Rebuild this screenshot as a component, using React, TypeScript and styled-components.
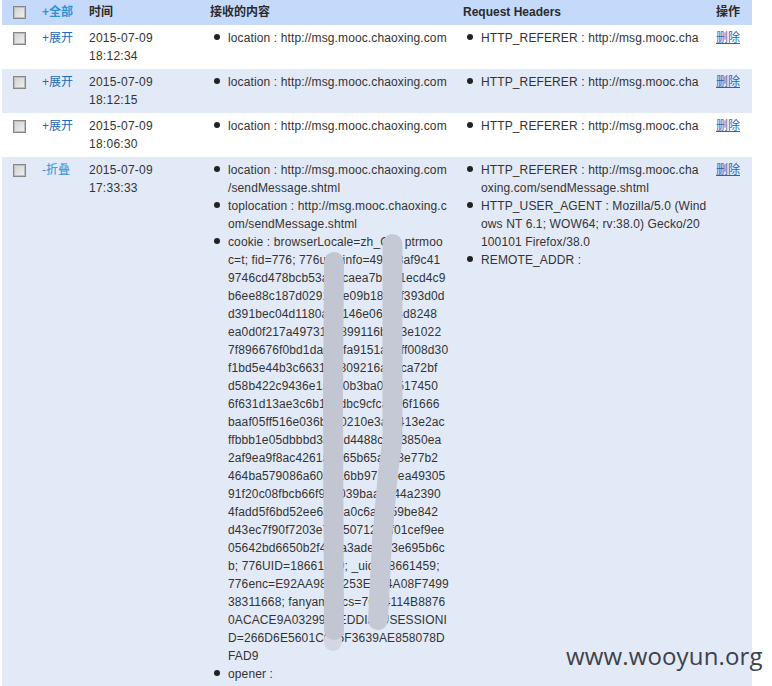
import {createGlobalStyle} from "styled-components";
import styled from "styled-components";

const GlobalStyle = createGlobalStyle`
  html, body {
    margin: 0;
    height: 686px;
    overflow: hidden;
    background: #fff;
  }
  body {
    font-family: "Liberation Sans", Arial, "Noto Sans CJK SC", sans-serif;
    font-size: 12px;
    line-height: 18px;
    color: #333;
  }
`;

const Page = styled.div`
  position: relative;
  width: 772px;
  height: 686px;
  overflow: hidden;
  padding-left: 2px;
  box-sizing: border-box;
`;

const Table = styled.table`
  width: 750px;
  table-layout: fixed;
  border-collapse: collapse;
`;

const Head = styled.th`
  padding: 3px 2px 4px;
  background: #c5d9fa;
  color: #2b2b2b;
  font-weight: bold;
  text-align: left;
  vertical-align: top;
`;

const Row = styled.tr<{$even?: boolean}>`
  background: ${(p) => (p.$even ? "#e3eaf7" : "#fff")};
`;

const Cell = styled.td`
  padding: 4px 2px;
  vertical-align: top;
`;

const Check = styled.span`
  display: block;
  width: 11px;
  height: 11px;
  margin: 3px 0 0 9px;
  border: 1px solid #868686;
  outline: 1px solid #bdbdbd;
  outline-offset: -2px;
  background: linear-gradient(135deg, #cfcfcf, #f2f2f2);
`;

const Toggle = styled.a<{$light?: boolean}>`
  color: ${(p) => (p.$light ? "#2c93d6" : "#1a6bb8")};
  cursor: pointer;
`;

const TimeText = styled.div`
  width: 70px;
  letter-spacing: 0.26px;
`;

const List = styled.ul`
  margin: 0;
  padding: 0 0 0 18px;
  list-style: none;
  letter-spacing: 0.12px;
`;

const Item = styled.li`
  position: relative;

  &::before {
    content: "";
    position: absolute;
    left: -14px;
    top: 5px;
    width: 6px;
    height: 6px;
    border-radius: 50%;
    background: #222;
  }
`;

const Line = styled.span`
  display: block;
  white-space: nowrap;
`;

const Remove = styled.a`
  color: #1a66c0;
  text-decoration: underline;
  cursor: pointer;
`;

const Smear = styled.svg`
  position: absolute;
  left: 0;
  top: 0;
  pointer-events: none;
`;

const Watermark = styled.div`
  position: absolute;
  left: 566px;
  top: 639px;
  font-family: "Open Sans", sans-serif;
  font-size: 24px;
  line-height: 34px;
  letter-spacing: 0.15px;
  color: #3d4149;
`;

const locationOnly = ["location : http://msg.mooc.chaoxing.com"];
const refererOnly = ["HTTP_REFERER : http://msg.mooc.cha"];

// the short runs in the middle of the cookie lines sit under the smear
const received = [
  ["location : http://msg.mooc.chaoxing.com", "/sendMessage.shtml"],
  ["toplocation : http://msg.mooc.chaoxing.c", "om/sendMessage.shtml"],
  [
    "cookie : browserLocale=zh_CN; ptrmoo",
    "c=t; fid=776; 776uid_info=49a03af9c41",
    "9746cd478bcb53a0ecaea7b1f01ecd4c9",
    "b6ee88c187d0291a0e09b1842ff393d0d",
    "d391bec04d1180a16146e06a04d8248",
    "ea0d0f217a49731a0899116b0a3e1022",
    "7f896676f0bd1da0ecfa9151a0eff008d30",
    "f1bd5e44b3c6631ab809216a0aca72bf",
    "d58b422c9436e1a050b3ba0a1517450",
    "6f631d13ae3c6b1a0dbc9cfca076f1666",
    "baaf05ff516e036b1a0210e3a0f413e2ac",
    "ffbbb1e05dbbbd3a1ad4488ca0f3850ea",
    "2af9ea9f8ac4261a0a65b65a018e77b2",
    "464ba579086a60a1a6bb97a10ea49305",
    "91f20c08fbcb66f9a1039baa0144a2390",
    "4fadd5f6bd52ee6a14a0c6a1059be842",
    "d43ec7f90f7203e7a150712a1f01cef9ee",
    "05642bd6650b2f4a1a3adea1f3e695b6c",
    "b; 776UID=18661459; _uid=18661459;",
    "776enc=E92AA98D0253E5A4A08F7499",
    "38311668; fanyamoocs=7C14114B8876",
    "0ACACE9A03299C-EDDIJ_USESSIONI",
    "D=266D6E5601C006F3639AE858078D",
    "FAD9",
  ],
  ["opener :"],
];

const headers = [
  ["HTTP_REFERER : http://msg.mooc.cha", "oxing.com/sendMessage.shtml"],
  [
    "HTTP_USER_AGENT : Mozilla/5.0 (Wind",
    "ows NT 6.1; WOW64; rv:38.0) Gecko/20",
    "100101 Firefox/38.0",
  ],
  ["REMOTE_ADDR :"],
];

const records = [
  {date: "2015-07-09", time: "18:12:34", open: false},
  {date: "2015-07-09", time: "18:12:15", open: false},
  {date: "2015-07-09", time: "18:06:30", open: false},
  {date: "2015-07-09", time: "17:33:33", open: true},
];

function Items({items}: {items: string[][]}) {
  return (
    <List>
      {items.map((lines) => (
        <Item key={lines[0]}>
          {lines.map((line) => (
            <Line key={line}>{line}</Line>
          ))}
        </Item>
      ))}
    </List>
  );
}

export default function App() {
  return (
    <Page>
      <GlobalStyle />
      <Table>
        <colgroup>
          <col width={38} />
          <col width={47} />
          <col width={121} />
          <col width={253} />
          <col width={253} />
          <col width={38} />
        </colgroup>
        <thead>
          <tr>
            <Head><Check /></Head>
            <Head><Toggle $light>+全部</Toggle></Head>
            <Head>时间</Head>
            <Head>接收的内容</Head>
            <Head>Request Headers</Head>
            <Head>操作</Head>
          </tr>
        </thead>
        <tbody>
          {records.map((r, i) => (
            <Row key={r.time} $even={i % 2 === 1}>
              <Cell><Check /></Cell>
              <Cell>
                {r.open ? <Toggle $light>-折叠</Toggle> : <Toggle>+展开</Toggle>}
              </Cell>
              <Cell>
                <TimeText>{r.date} {r.time}</TimeText>
              </Cell>
              <Cell>
                <Items items={r.open ? received : [locationOnly]} />
              </Cell>
              <Cell>
                <Items items={r.open ? headers : [refererOnly]} />
              </Cell>
              <Cell><Remove>删除</Remove></Cell>
            </Row>
          ))}
        </tbody>
      </Table>
      <Smear width={772} height={686} viewBox="0 0 772 686">
        <path d="M333 640 L333 642" stroke="#d3d7e3" strokeWidth={18} strokeLinecap="round" fill="none" />
        <path d="M334 262 L333 400 L334 630" stroke="#c2c6d2" strokeWidth={20} strokeLinecap="round" fill="none" />
        <path d="M392.5 244 L392.5 440 L388 473 L382 540 L378 620" stroke="#c5c9d5" strokeWidth={20} strokeLinecap="round" strokeLinejoin="round" fill="none" />
      </Smear>
      <Watermark>www.wooyun.org</Watermark>
    </Page>
  );
}
